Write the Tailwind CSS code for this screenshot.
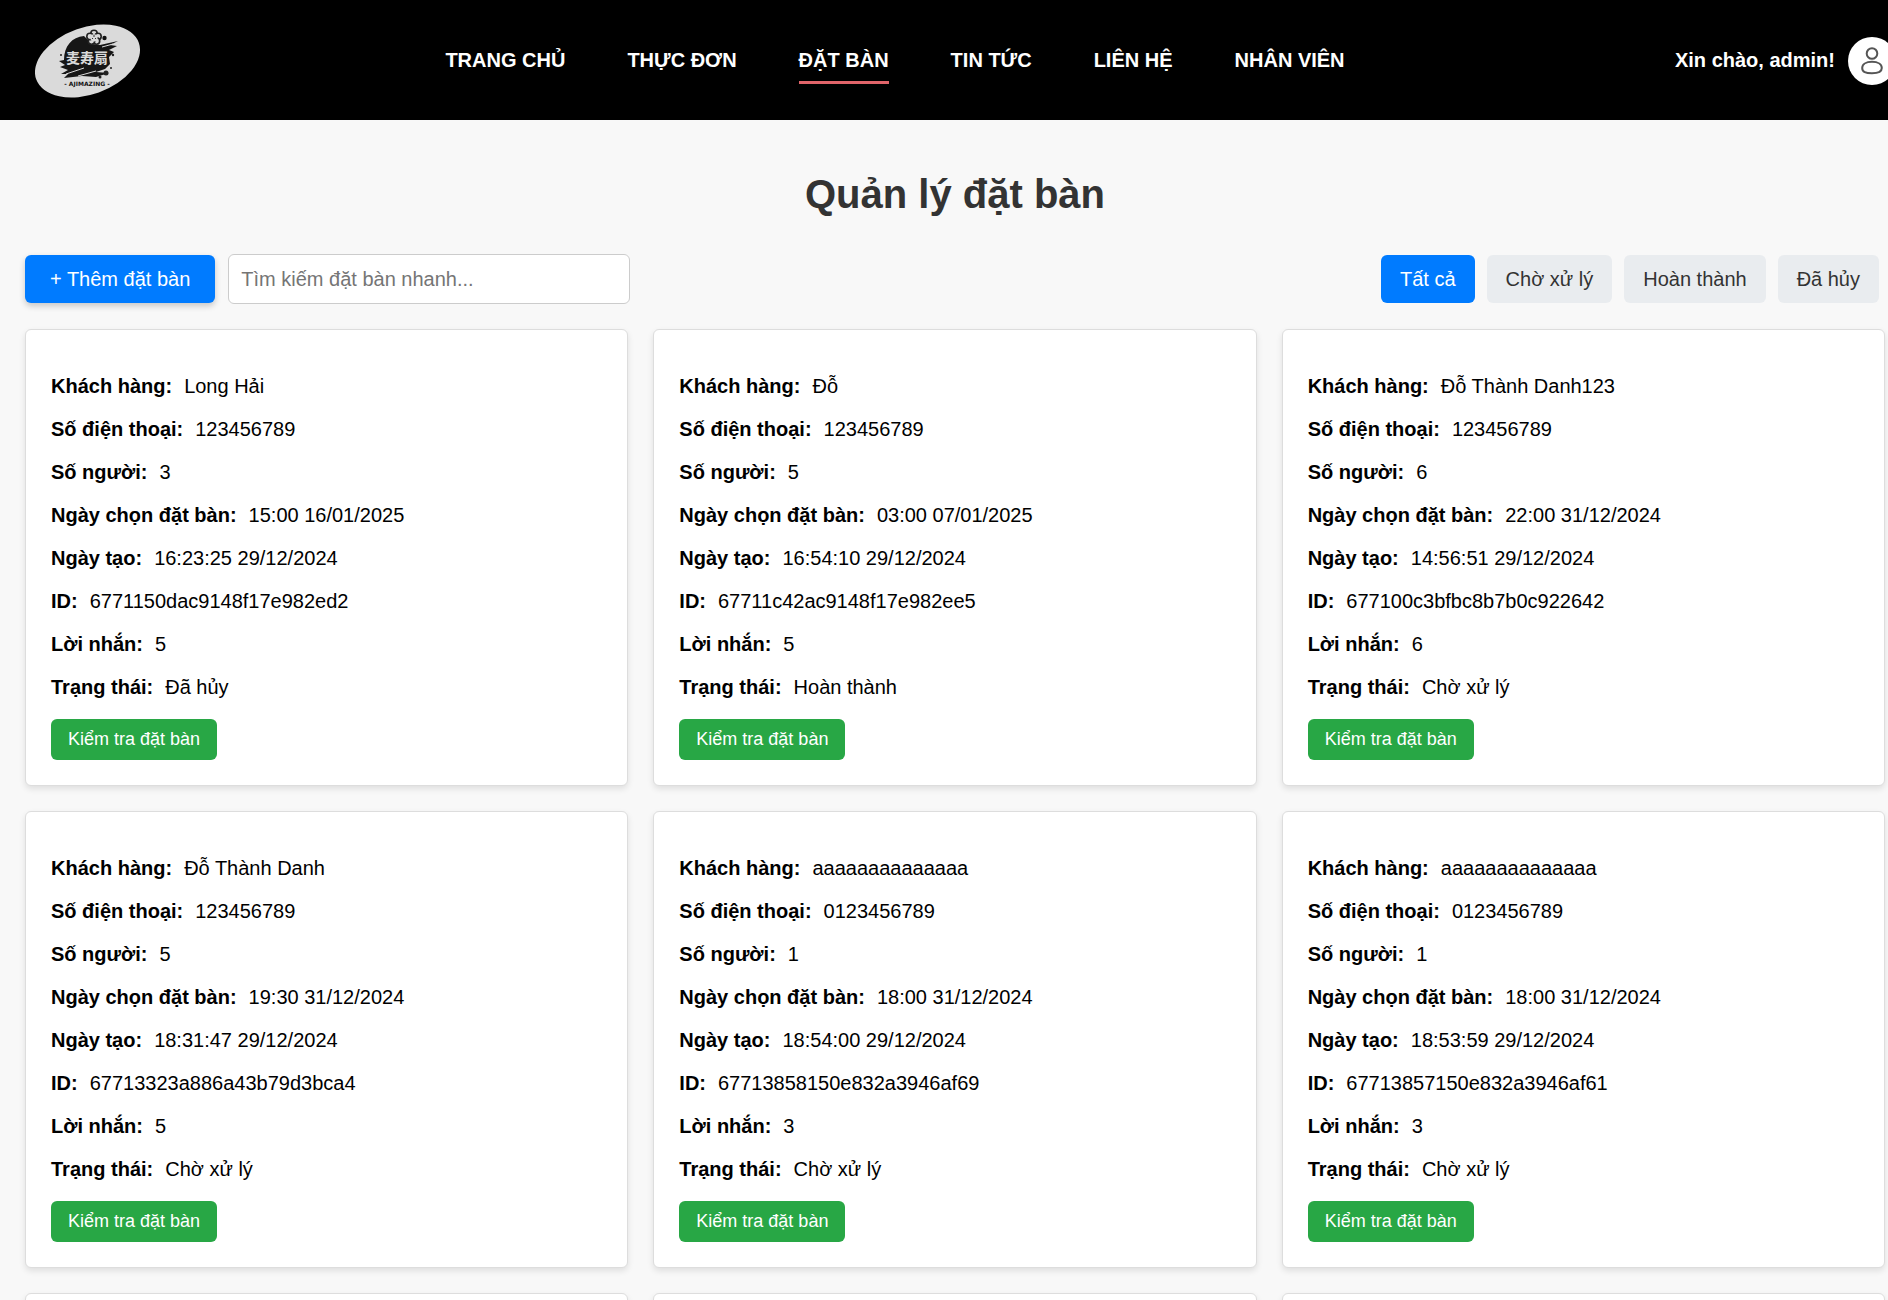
<!DOCTYPE html>
<html lang="vi">
<head>
<meta charset="utf-8">
<meta name="viewport" content="width=device-width, initial-scale=1">
<title>Quản lý đặt bàn</title>
<script src="https://cdn.jsdelivr.net/npm/@tailwindcss/browser@4"></script>
</head>
<body class="overflow-x-hidden bg-[#f8f8f8] font-['Liberation_Sans',Arial,sans-serif] text-[20px] leading-[23px] text-black">
<header class="flex h-[120px] items-center overflow-hidden bg-black pl-[35px] font-bold text-white">
  <a href="#" aria-label="Ajimazing" class="shrink-0">
    <svg width="106" height="76" viewBox="35 22 106 76">
      <ellipse cx="87.5" cy="61" rx="54.5" ry="33.5" transform="rotate(-19.7 87.5 61)" fill="#dadada"/>
      <path d="M64 60 C64 46 72 37 84 36 L92 44 L100 45 L118 41 L110 45 L117 46 L109 50 L114 52 L109 57 L110 64 L105 69 L96 72 L109 73 L96 77 L82 76 L64 78 L68 74 L61 74 L68 70 L60 67 L65 65 L59 61 Z" fill="#161616"/>
      <path d="M66 74 L84 68 M78 76 L96 71 M102 47 L113 44" stroke="#dadada" stroke-width="1"/>
      <g fill="#dadada" stroke="#222" stroke-width="1.6"><circle cx="94" cy="33.500" r="3.200"/><circle cx="98" cy="36.500" r="3.200"/><circle cx="96.500" cy="41" r="3.200"/><circle cx="91.500" cy="41" r="3.200"/><circle cx="90" cy="36.500" r="3.200"/></g>
      <circle cx="94" cy="37.800" r="3.600" fill="#dadada"/>
      <path d="M94 35v2M92 39l1-1M96 39l-1-1" stroke="#333" stroke-width="1"/>
      <circle cx="104.500" cy="38" r="2.200" fill="#111"/>
      <g fill="#222"><circle cx="61" cy="55" r="1"/><circle cx="113" cy="55" r="1.200"/><circle cx="111" cy="68" r="1"/><circle cx="106" cy="73" r="2.500"/><circle cx="100" cy="77" r="1.500"/></g>
      <text x="66" y="63" font-size="14" font-family="Noto Sans CJK JP, sans-serif" font-weight="700" fill="#dadada">麦寿扇</text>
      <text x="87" y="85.500" text-anchor="middle" font-size="6" font-family="DejaVu Sans, sans-serif" font-weight="700" fill="#111">- AJIMAZING -</text>
    </svg>
  </a>
  <nav class="mx-auto flex gap-[62px] whitespace-nowrap">
    <a href="#">TRANG CHỦ</a>
    <a href="#">THỰC ĐƠN</a>
    <a href="#" class="relative">ĐẶT BÀN<span class="absolute inset-x-0 top-8 h-[3px] bg-[#e06469]"></span></a>
    <a href="#">TIN TỨC</a>
    <a href="#">LIÊN HỆ</a>
    <a href="#">NHÂN VIÊN</a>
  </nav>
  <div class="-mr-2 flex shrink-0 items-center gap-[13px] pl-[26px]">
    <span>Xin chào, admin!</span>
    <button type="button" aria-label="Tài khoản" class="mt-[2px] size-12 rounded-full bg-white">
      <svg class="size-12" viewBox="0 0 48 48" fill="none" stroke="#555" stroke-width="2"><circle cx="24" cy="16.500" r="5.300"/><path d="M24 24.800c6 0 9.800 2.400 9.800 6.200 0 4-3.400 5.200-9.800 5.200s-9.800-1.200-9.800-5.200c0-3.800 3.800-6.200 9.800-6.200z"/></svg>
    </button>
  </div>
</header>
<main class="pr-[3px] pl-[25px]">
  <h1 class="pt-[51px] text-center text-[40px] leading-[46px] font-bold text-[#333]">Quản lý đặt bàn</h1>
  <div class="mt-[37px] flex items-center justify-between pr-[6px]">
    <div class="flex items-center gap-[13px]">
      <button type="button" class="h-12 rounded-md bg-[#007bff] px-[25px] text-white shadow-[0_3px_6px_rgba(0,0,0,0.2)]">+ Thêm đặt bàn</button>
      <input type="text" aria-label="Tìm kiếm đặt bàn" placeholder="Tìm kiếm đặt bàn nhanh..." class="h-[50px] w-[402px] rounded-md border border-[#ccc] bg-white px-3 placeholder:text-[#757575]">
    </div>
    <div class="flex gap-3 text-[#333]">
      <button type="button" class="h-12 rounded-md bg-[#007bff] px-[19px] text-white">Tất cả</button>
      <button type="button" class="h-12 rounded-md bg-[#e9ecef] px-[19px]">Chờ xử lý</button>
      <button type="button" class="h-12 rounded-md bg-[#e9ecef] px-[19px]">Hoàn thành</button>
      <button type="button" class="h-12 rounded-md bg-[#e9ecef] px-[19px]">Đã hủy</button>
    </div>
  </div>
  <section id="cards" class="mt-[25px] grid grid-cols-3 gap-[25px]"></section>
</main>
<script>
const labels = ['Khách hàng', 'Số điện thoại', 'Số người', 'Ngày chọn đặt bàn', 'Ngày tạo', 'ID', 'Lời nhắn', 'Trạng thái'];
const bookings = [
  ['Long Hải', '123456789', '3', '15:00 16/01/2025', '16:23:25 29/12/2024', '6771150dac9148f17e982ed2', '5', 'Đã hủy'],
  ['Đỗ', '123456789', '5', '03:00 07/01/2025', '16:54:10 29/12/2024', '67711c42ac9148f17e982ee5', '5', 'Hoàn thành'],
  ['Đỗ Thành Danh123', '123456789', '6', '22:00 31/12/2024', '14:56:51 29/12/2024', '677100c3bfbc8b7b0c922642', '6', 'Chờ xử lý'],
  ['Đỗ Thành Danh', '123456789', '5', '19:30 31/12/2024', '18:31:47 29/12/2024', '67713323a886a43b79d3bca4', '5', 'Chờ xử lý'],
  ['aaaaaaaaaaaaaa', '0123456789', '1', '18:00 31/12/2024', '18:54:00 29/12/2024', '67713858150e832a3946af69', '3', 'Chờ xử lý'],
  ['aaaaaaaaaaaaaa', '0123456789', '1', '18:00 31/12/2024', '18:53:59 29/12/2024', '67713857150e832a3946af61', '3', 'Chờ xử lý'],
  null, null, null
];
document.getElementById('cards').innerHTML = bookings.map(b => `
  <article class="flex min-h-24 flex-col items-start gap-5 rounded-md border border-[#ddd] bg-white px-[25px] pt-[45px] pb-[25px] shadow-[0_3px_6px_rgba(0,0,0,0.1)]">
    ${b ? b.map((v, i) => `<p class="flex gap-3"><strong>${labels[i]}:</strong><span>${v}</span></p>`).join('') +
    '<button type="button" class="h-[41px] rounded-md bg-[#28a745] px-[17px] text-[18px] text-white">Kiểm tra đặt bàn</button>' : ''}
  </article>`).join('');
</script>
</body>
</html>
